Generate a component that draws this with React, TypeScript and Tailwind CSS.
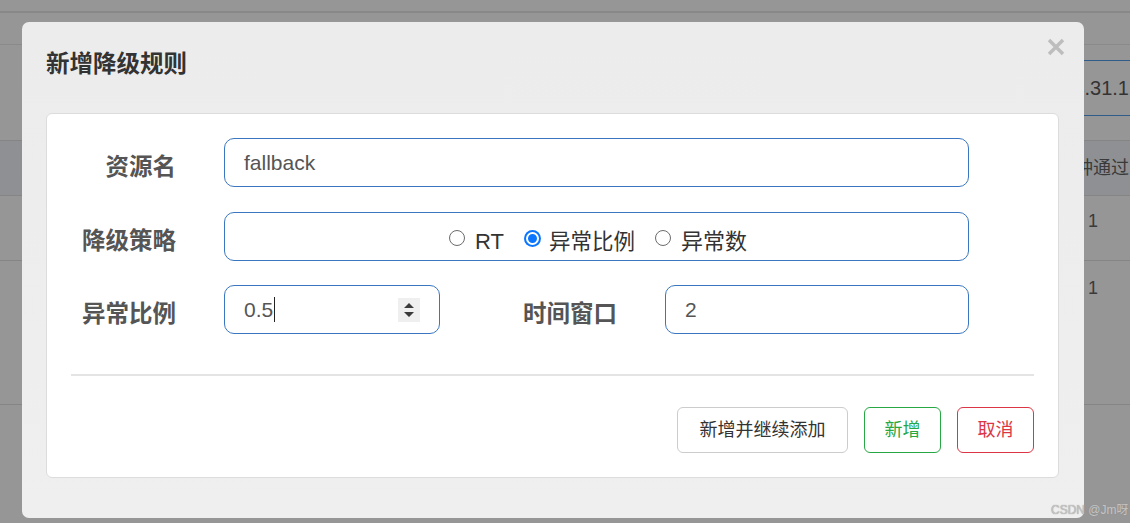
const CJK = "font-['Liberation_Sans','Noto_Sans_CJK_SC',sans-serif]";

function Circle({ checked, className = '' }: { checked?: boolean; className?: string }) {
  if (checked) {
    return (
      <span className={`mb-[8px] flex h-[17px] w-[17px] shrink-0 items-center justify-center rounded-full bg-[#0a75ff] ${className}`}>
        <span className="h-[13px] w-[13px] rounded-full border-[2px] border-white bg-[#0a75ff]" />
      </span>
    );
  }
  return <span className={`mb-[8px] block h-[16px] w-[16px] shrink-0 rounded-full border border-[#6b6b6b] bg-white ${className}`} />;
}

function FieldLabel({ children, width }: { children: string; width: string }) {
  return (
    <div className={`${width} pt-[8px] text-right text-[23.5px] leading-[30px] font-bold text-[#555]`}>{children}</div>
  );
}

export default function App() {
  return (
    <div className={`relative h-[523px] w-[1130px] overflow-hidden bg-[#969696] ${CJK}`}>
      {/* page behind the overlay */}
      <div className="h-[11px]" />
      <div className="h-[2px] bg-[#888]" />
      <div className="h-[31px]" />
      <div className="h-px bg-[#8a8a8a]" />
      <div className="h-[15px]" />
      <div className="flex justify-end">
        <div className="flex h-[56px] w-[200px] items-center justify-end border-y border-[#2f5c88] pr-[1px] text-[20px] text-[#333]">
          192.168.31.1
        </div>
      </div>
      <div className="h-[24px]" />
      <div className="h-px bg-[#858585]" />
      <div className="flex h-[54px] items-center bg-[#8f9093] pl-[1039px] text-[18px] whitespace-nowrap text-[#3a3a3a]">
        每分钟通过
      </div>
      <div className="h-px bg-[#858585]" />
      <div className="h-[64px] pl-[1088px] pt-[12px] text-[18px] text-[#3a3a3a]">1</div>
      <div className="h-px bg-[#858585]" />
      <div className="h-[143px] pl-[1088px] pt-[14px] text-[18px] text-[#3a3a3a]">1</div>
      <div className="h-px bg-[#858585]" />

      {/* modal */}
      <div className="absolute left-[22px] top-[22px] h-[496px] w-[1062px] rounded-[7px] bg-gradient-to-b from-[#ececec] to-[#efefef]">
        <button type="button" className="absolute right-[19px] top-[16px] h-[18px] w-[18px]" aria-label="close">
          <svg viewBox="0 0 18 18" className="h-[18px] w-[18px]">
            <path d="M2 2 L16 16 M16 2 L2 16" stroke="#bdbdbd" strokeWidth="3.4" />
          </svg>
        </button>
        <h4 className="pl-[24px] pt-[28px] text-[23.5px] leading-[28px] font-bold text-[#333]">新增降级规则</h4>

        <div className="ml-[24px] mt-[35px] w-[1013px] rounded-[6px] border border-[#dcdcdc] bg-white pt-[24px] pb-[24px]">
          <div className="flex flex-col gap-[25px]">
            <div className="flex items-center">
              <FieldLabel width="w-[129px]">资源名</FieldLabel>
              <div className="ml-[48px] flex h-[49px] w-[745px] items-center rounded-[10px] border border-[#3a77c0] pl-[19px] text-[21px] text-[#555]">
                fallback
              </div>
            </div>
            <div className="flex items-center">
              <FieldLabel width="w-[129px]">降级策略</FieldLabel>
              <div className="ml-[48px] flex h-[49px] w-[745px] items-center rounded-[10px] border border-[#3a77c0] pl-[224px] pt-[11px] text-[21px] leading-[28px] text-[#333]">
                <Circle />
                <span className="ml-[10px] text-[22px]">RT</span>
                <Circle checked className="ml-[20px]" />
                <span className="ml-[8px] text-[21.5px]">异常比例</span>
                <Circle className="ml-[20px]" />
                <span className="ml-[10px] text-[22px]">异常数</span>
              </div>
            </div>
            <div className="-mt-px flex items-center">
              <FieldLabel width="w-[129px]">异常比例</FieldLabel>
              <div className="ml-[48px] flex h-[49px] w-[216px] items-center rounded-[10px] border border-[#3a77c0] pl-[19px] pr-[19px] text-[21px] text-[#555]">
                <span>0.5</span>
                <span className="ml-px h-[25px] w-px bg-[#222]" />
                <span className="ml-auto flex h-[24px] w-[22px] items-center justify-center bg-[#efefef]">
                  <svg viewBox="0 0 22 24" className="h-[24px] w-[22px]">
                    <path d="M6 10 L11 5 L16 10 Z M6 14 L16 14 L11 19 Z" fill="#3a3a3a" />
                  </svg>
                </span>
              </div>
              <FieldLabel width="w-[177px]">时间窗口</FieldLabel>
              <div className="ml-[48px] flex h-[49px] w-[304px] items-center rounded-[10px] border border-[#3a77c0] pl-[19px] text-[21px] text-[#555]">
                2
              </div>
            </div>
          </div>

          <div className="mx-[24px] mt-[40px] h-[2px] bg-[#e4e4e4]" />

          <div className="mt-[31px] mr-[24px] flex justify-end gap-[16px] text-[18px]">
            <button type="button" className="h-[46px] w-[171px] rounded-[6px] border border-[#cccccc] bg-white text-[#333]">
              新增并继续添加
            </button>
            <button type="button" className="h-[46px] w-[77px] rounded-[6px] border border-[#28a745] bg-white text-[#28a745]">
              新增
            </button>
            <button type="button" className="h-[46px] w-[77px] rounded-[6px] border border-[#dc3545] bg-white text-[#dc3545]">
              取消
            </button>
          </div>
        </div>
      </div>

      <div className="absolute left-[1051px] top-[501px] text-[12px] text-[#c4c4c4] [text-shadow:0_0_1px_#8a8a8a]">
        CSDN @Jm呀
      </div>
    </div>
  );
}
